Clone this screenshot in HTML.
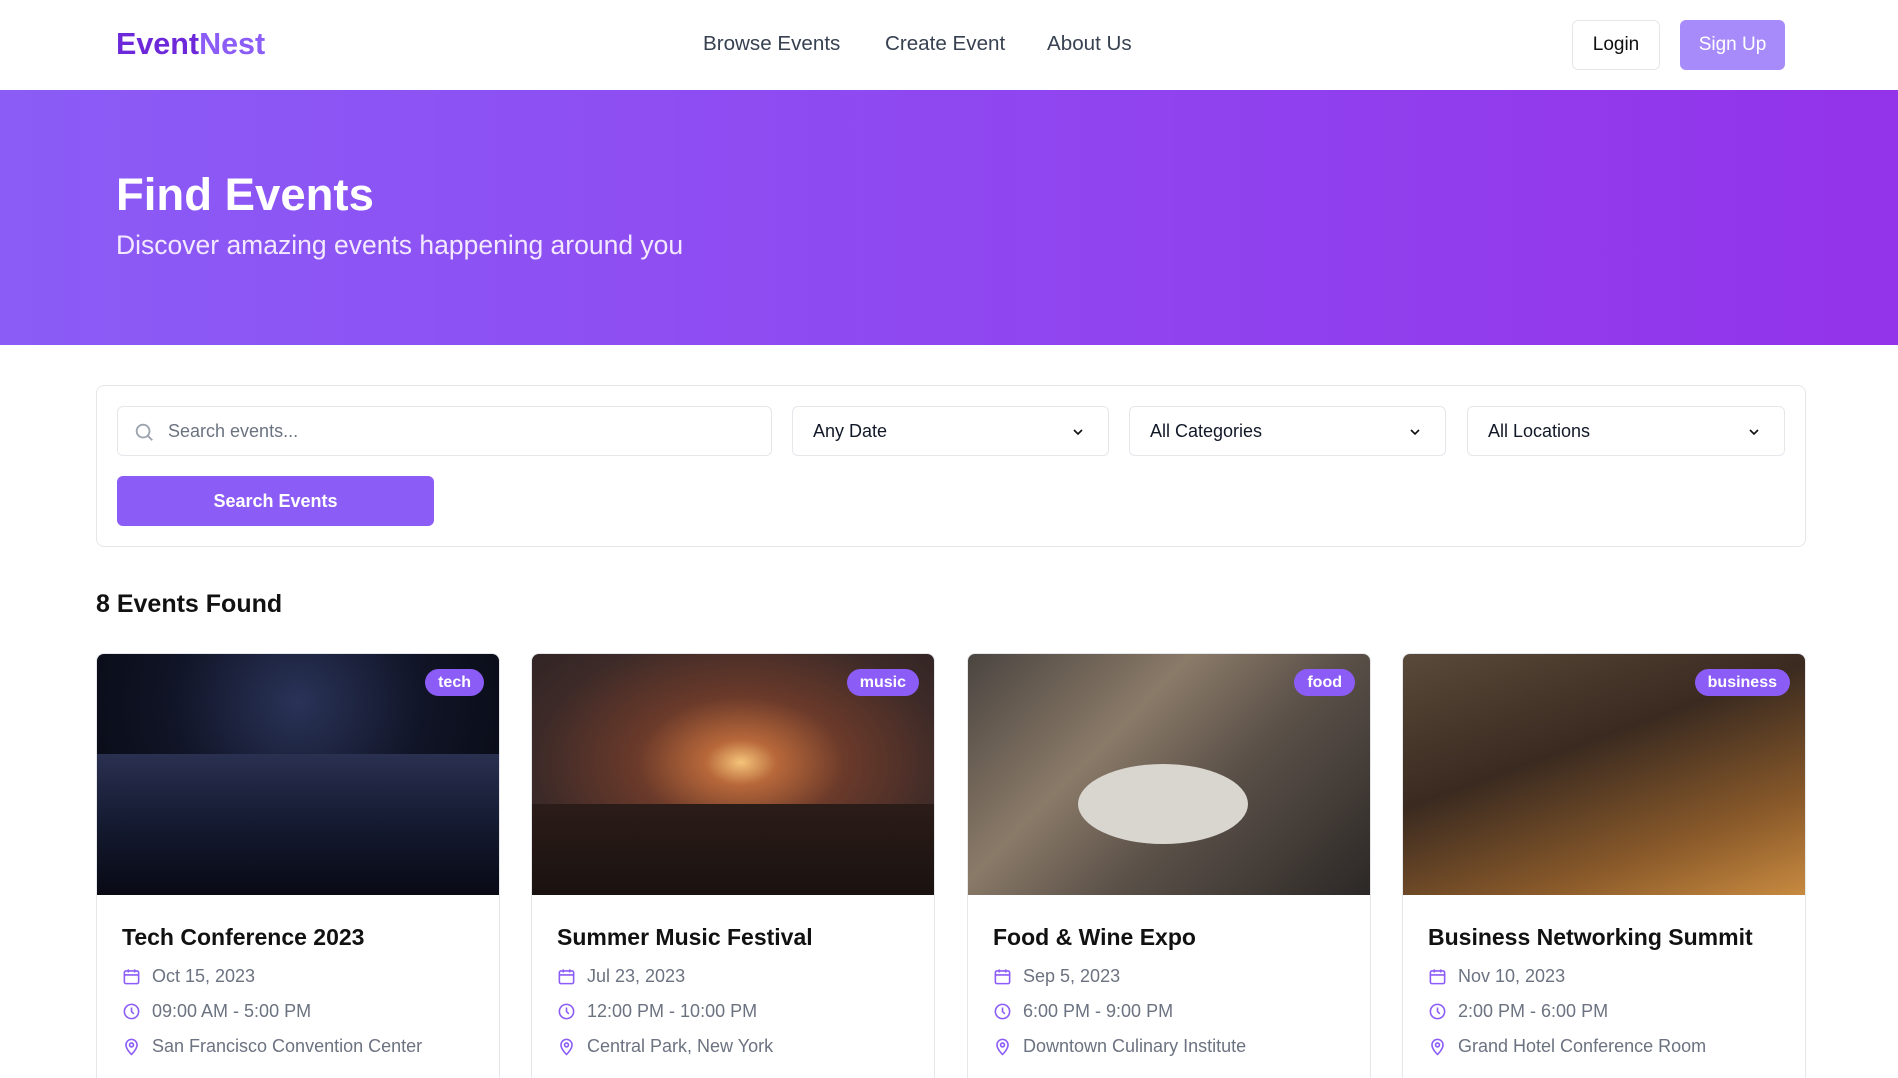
<!DOCTYPE html>
<html style="width:1898px;height:1078px;overflow:hidden"><head><meta charset="utf-8"><style>
*{box-sizing:border-box;margin:0;padding:0}
body{width:1898px;height:1078px;overflow:hidden;background:#fff;font-family:"Liberation Sans",sans-serif;position:relative}
.abs{position:absolute}
.nav a{position:absolute;top:32px;font-size:20.6px;color:#374151}
.btn{position:absolute;border-radius:6px;font-size:19px;display:flex;align-items:center;justify-content:center}
.field{position:absolute;top:406px;height:50px;border:1px solid #e5e7eb;border-radius:6px;display:flex;align-items:center;font-size:18px;color:#111827;padding-left:20px}
.field svg.ch{position:absolute;right:22px;top:17px}
.card{position:absolute;top:653px;width:404px;height:425px;border:1px solid #e5e7eb;border-bottom:none;border-radius:8px 8px 0 0;overflow:hidden;background:#fff}
.img{height:241px;position:relative}
.badge{position:absolute;top:15px;right:15px;height:27px;padding:0 13px;border-radius:14px;background:#8b5cf6;color:#fff;font-size:16px;font-weight:bold;display:flex;align-items:center}
.card h3{position:absolute;left:25px;top:270px;font-size:23px;font-weight:bold;color:#111}
.row{position:absolute;left:25px;font-size:18px;color:#6b7280;display:flex;align-items:center}
.row svg{margin-right:11px}
</style></head><body>
<div class="abs" style="left:116px;top:27px;font-size:30.5px;font-weight:bold;color:#6d28d9">Event<span style="color:#8b5cf6">Nest</span></div>
<div class="nav"><a style="left:703px">Browse Events</a><a style="left:885px">Create Event</a><a style="left:1047px">About Us</a></div>
<div class="btn" style="left:1572px;top:20px;width:88px;height:50px;border:1px solid #e5e7eb;color:#111">Login</div>
<div class="btn" style="left:1680px;top:20px;width:105px;height:50px;background:#a78bfa;color:#fff">Sign Up</div>
<div class="abs" style="left:0;top:90px;width:1898px;height:255px;background:linear-gradient(90deg,#8b5cf6,#9333ea)">
<div class="abs" style="left:116px;top:79px;font-size:45.5px;font-weight:bold;color:#fff">Find Events</div>
<div class="abs" style="left:116px;top:140px;font-size:26.5px;color:#f3e8ff">Discover amazing events happening around you</div>
</div>
<div class="abs" style="left:96px;top:385px;width:1710px;height:162px;border:1px solid #e5e7eb;border-radius:8px"></div>
<div class="field" style="left:117px;width:655px;color:#6b7280;padding-left:50px">
<svg class="abs" style="left:15px;top:14px" width="22" height="22" viewBox="0 0 24 24" fill="none" stroke="#9ca3af" stroke-width="2"><circle cx="11" cy="11" r="7"/><path d="M16 16l5 5"/></svg>Search events...</div>
<div class="field" style="left:792px;width:317px">Any Date<svg class="ch" width="16" height="16" viewBox="0 0 24 24" fill="none" stroke="#111" stroke-width="2.5"><path d="M6 9l6 6 6-6"/></svg></div>
<div class="field" style="left:1129px;width:317px">All Categories<svg class="ch" width="16" height="16" viewBox="0 0 24 24" fill="none" stroke="#111" stroke-width="2.5"><path d="M6 9l6 6 6-6"/></svg></div>
<div class="field" style="left:1467px;width:318px">All Locations<svg class="ch" width="16" height="16" viewBox="0 0 24 24" fill="none" stroke="#111" stroke-width="2.5"><path d="M6 9l6 6 6-6"/></svg></div>
<div class="btn" style="left:117px;top:476px;width:317px;height:50px;background:#8b5cf6;color:#fff;font-weight:bold;font-size:18px">Search Events</div>
<div class="abs" style="left:96px;top:590px;font-size:25px;font-weight:bold;color:#111">8 Events Found</div>

<div class="card" style="left:96px"><div class="img" style="background:radial-gradient(ellipse at 50% 20%,#2a3358 0%,#101426 45%,#05070d 100%)"><div class="abs" style="left:0;right:0;top:100px;height:141px;background:linear-gradient(#2a3050,#141a30 50%,#080a14)"></div><div class="badge">tech</div></div>
<h3>Tech Conference 2023</h3></div>

<div class="card" style="left:531px"><div class="img" style="background:radial-gradient(ellipse at 52% 45%,#f5c47a 0%,#b8683a 12%,#6b3a2a 35%,#3c2a28 70%,#2d2223 100%)"><div class="abs" style="left:0;right:0;top:150px;height:91px;background:linear-gradient(#2b1c18,#1a1210)"></div><div class="badge">music</div></div>
<h3>Summer Music Festival</h3></div>

<div class="card" style="left:967px"><div class="img" style="background:linear-gradient(135deg,#4a4440 0%,#8a7a68 35%,#5a5048 60%,#2c2826 100%)"><div class="abs" style="left:110px;top:110px;width:170px;height:80px;border-radius:50%;background:#d9d6d0"></div><div class="badge">food</div></div>
<h3>Food &amp; Wine Expo</h3></div>

<div class="card" style="left:1402px"><div class="img" style="background:linear-gradient(160deg,#5a4a3a 0%,#3a2a20 40%,#8a5a2a 75%,#c88a40 100%)"><div class="badge">business</div></div>
<h3>Business Networking Summit</h3></div>

<script>
const data=[[96,"Oct 15, 2023","09:00 AM - 5:00 PM","San Francisco Convention Center"],[531,"Jul 23, 2023","12:00 PM - 10:00 PM","Central Park, New York"],[967,"Sep 5, 2023","6:00 PM - 9:00 PM","Downtown Culinary Institute"],[1402,"Nov 10, 2023","2:00 PM - 6:00 PM","Grand Hotel Conference Room"]];
const ic=[
'<svg width="19" height="19" viewBox="0 0 24 24" fill="none" stroke="#8b5cf6" stroke-width="2"><rect x="3" y="5" width="18" height="16" rx="2"/><path d="M3 10h18M8 3v4M16 3v4"/></svg>',
'<svg width="19" height="19" viewBox="0 0 24 24" fill="none" stroke="#8b5cf6" stroke-width="2"><circle cx="12" cy="12" r="9"/><path d="M12 7v5l3 3"/></svg>',
'<svg width="19" height="19" viewBox="0 0 24 24" fill="none" stroke="#8b5cf6" stroke-width="2"><path d="M12 22s7-6.5 7-12a7 7 0 0 0-14 0c0 5.5 7 12 7 12z"/><circle cx="12" cy="10" r="2.5"/></svg>'];
document.querySelectorAll('.card').forEach((c,i)=>{
[1,2,3].forEach((k,j)=>{const d=document.createElement('div');d.className='row';d.style.top=(312+j*35)+'px';d.innerHTML=ic[j]+data[i][k];c.appendChild(d);});});
</script>
</body></html>
